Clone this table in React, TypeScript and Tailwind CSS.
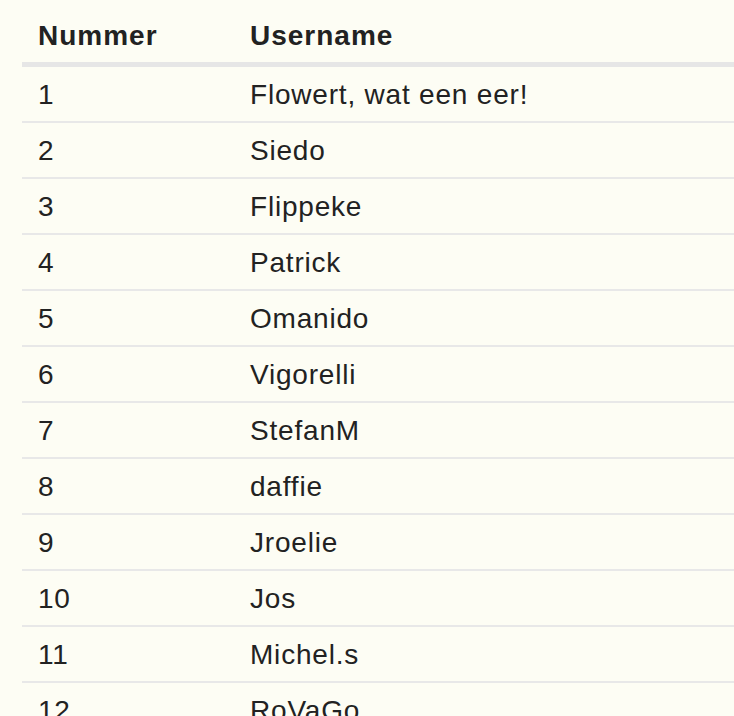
import React from 'react';

const users = [
  'Flowert, wat een eer!',
  'Siedo',
  'Flippeke',
  'Patrick',
  'Omanido',
  'Vigorelli',
  'StefanM',
  'daffie',
  'Jroelie',
  'Jos',
  'Michel.s',
  'RoVaGo',
  'Henk',
];

const App = () => {
  return (
    <div
      className="h-[716px] overflow-hidden bg-[#fdfdf4] pl-[22px] text-[#222222]"
      style={{ fontFamily: '"Liberation Sans", Arial, sans-serif' }}
    >
      <table className="w-[calc(100%+20px)] border-collapse text-left text-[28px] leading-[34px] tracking-[0.8px]">
        <thead>
          <tr className="border-b-[5px] border-[#e6e6e6]">
            <th className="w-[212px] pl-4 pt-[19px] pb-[9px] font-bold tracking-[1px]">Nummer</th>
            <th className="pl-4 pt-[19px] pb-[9px] font-bold tracking-[1px]">Username</th>
          </tr>
        </thead>
        <tbody>
          {users.map((name, i) => (
            <tr key={name} className="border-b-2 border-[#e8e8e8]">
              <td className="pl-4 pt-[11px] pb-[9px]">{i + 1}</td>
              <td className="pl-4 pt-[11px] pb-[9px]">{name}</td>
            </tr>
          ))}
        </tbody>
      </table>
    </div>
  );
};

export default App;
